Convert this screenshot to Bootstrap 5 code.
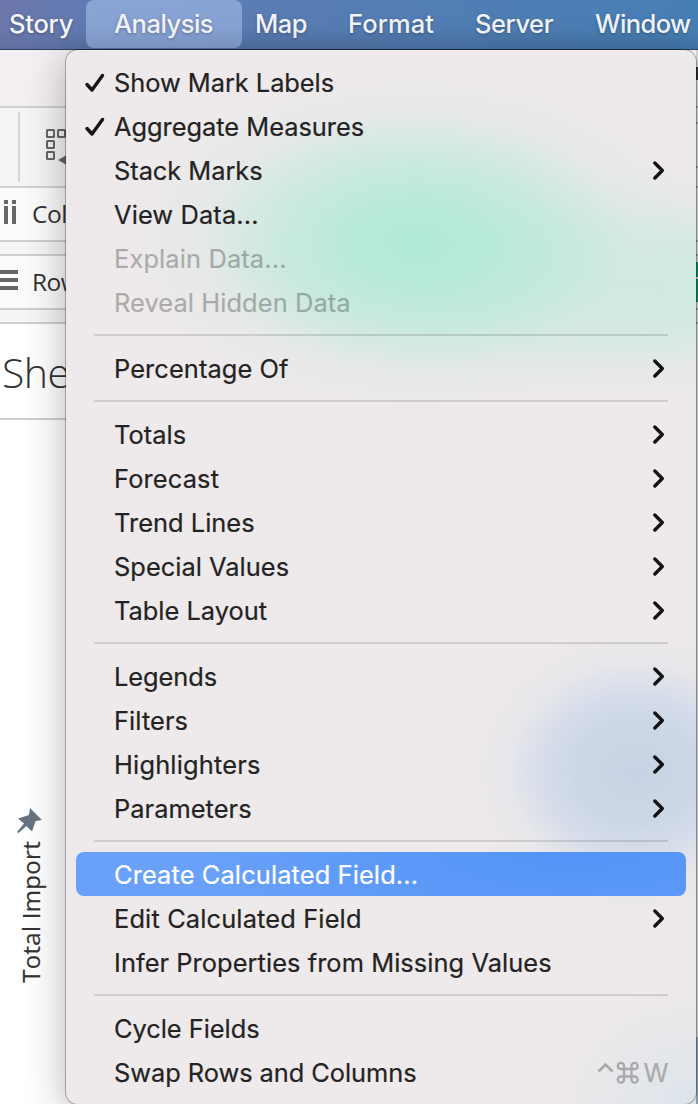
<!DOCTYPE html>
<html lang="en">
<head>
<meta charset="utf-8">
<meta name="viewport" content="width=device-width, initial-scale=1">
<title>Analysis menu</title>
<link href="https://cdn.jsdelivr.net/npm/bootstrap@5.3.0/dist/css/bootstrap.min.css" rel="stylesheet">
<style>
  body { width: 698px; height: 1104px; overflow: hidden; background: #fff; font-family: Inter, sans-serif; }
  .topbar { height: 50px; background: linear-gradient(180deg, transparent 60%, rgba(50,70,110,.16)), linear-gradient(90deg, #6c76aa 0, #5f7bb2 90px, #587db3 300px, #467fb5 698px); border-bottom: 1px solid #234660; color: #f4f6fb; font-size: 25.5px; font-weight: 500; text-shadow: 0 1px 3px rgba(0,0,0,.3); }
  .topbar .nav-item { height: 48px; line-height: 48px; white-space: nowrap; }
  .topbar .open { width: 156px; background: rgba(165,190,235,.6); border-radius: 8px; }
  .sheet { color: #333; width: 80px; white-space: nowrap; }
  .titleband { height: 58px; background: #f4f0f1; border-bottom: 2px solid #d2d0d0; }
  .tools { height: 80px; background: #f5f5f5; border-bottom: 2px solid #d2d2d2; }
  .tools .rule { width: 2px; height: 70px; background: #d4d4d4; }
  .shelf { height: 54px; background: #fbfbfb; border-bottom: 2px solid #cfcfcf; font-family: "Open Sans", sans-serif; font-size: 24.5px; letter-spacing: -.5px; }
  .shelf svg, .tools svg { flex: none; }
  .shelfgap { height: 14px; background: #f5f5f5; border-bottom: 2px solid #cfcfcf; }
  .sheetname { height: 96px; border-bottom: 2px solid #cfcfcf; font-family: "Open Sans", sans-serif; font-weight: 300; font-size: 41px; padding: 4px 0 0 2px; letter-spacing: -.5px; }
  .axis { padding: 387px 0 0 16px; width: 50px; }
  .axis span { writing-mode: vertical-rl; transform: rotate(180deg); font-family: "Open Sans", sans-serif; font-size: 24px; line-height: 32px; letter-spacing: .3px; margin: 6px 0 0 -1px; -webkit-text-stroke: .2px; }
  .edge { left: 696px; top: 50px; width: 2px; height: 1054px; background: #dedede; }
  .panel { left: 66px; top: 50px; width: 630px; height: 1054px; padding: 10px; border-radius: 12px; color: #232323; font-size: 25.4px; -webkit-text-stroke: .2px;
    background:
      radial-gradient(ellipse 170px 145px at 570px 722px, #c7d3e4 0, #ccd7e6 35%, rgba(211,219,234,.85) 56%, rgba(225,229,235,.5) 76%, rgba(236,233,234,0) 100%),
      radial-gradient(ellipse 290px 170px at 350px 192px, #b2ead8 0, rgba(180,234,216,.9) 25%, rgba(190,233,220,.7) 50%, rgba(215,233,228,.35) 75%, rgba(237,233,234,0) 100%),
      radial-gradient(ellipse 380px 120px at 560px 235px, rgba(200,233,224,.9) 0, rgba(206,233,226,.7) 45%, rgba(222,232,232,.35) 75%, rgba(237,233,234,0) 100%),
      radial-gradient(ellipse 150px 120px at 630px 1054px, #dce5eb 0, rgba(237,233,234,0) 100%),
      #eee9ea;
    box-shadow: 0 0 0 1px rgba(0,0,0,.28), 0 8px 42px rgba(0,0,0,.3); }
  .entry { height: 44px; padding: 0 20px 0 38px; line-height: 44px; position: relative; white-space: nowrap; }
  .entry [data-w] { padding-top: 2px; }
  .entry svg.tick { position: absolute; left: 8px; top: 13px; }
  .entry.off { color: #000; }
  .entry.off span { opacity: .27; }
  .entry.hot { background: radial-gradient(ellipse 380px 130px at 500px -10px, #5193f6 0, #5c9af8 55%, #69a1fa 100%); border-radius: 8px; color: #fff; }
  .divide { height: 2px; margin: 10px 18px; background: rgba(0,0,0,.12); }
  .keys { color: #a9a9aa; }
</style>
</head>
<body>
<nav class="topbar d-flex">
  <div class="nav-item" style="width:86px;padding-left:9px"><span data-w="63.500">Story</span></div>
  <div class="nav-item open" style="padding-left:28px"><span data-w="98.500">Analysis</span></div>
  <div class="nav-item" style="width:106px;padding-left:13px"><span data-w="51.500">Map</span></div>
  <div class="nav-item" style="width:127px"><span data-w="85.500">Format</span></div>
  <div class="nav-item" style="width:120px"><span data-w="77.500">Server</span></div>
  <div class="nav-item"><span data-w="95">Window</span></div>
</nav>
<main class="sheet">
  <div class="titleband"></div>
  <div class="tools d-flex">
    <div class="rule mt-1" style="margin-left:18px"></div>
    <svg width="24" height="42" viewBox="0 0 24 42" style="margin:18px 0 0 25px" fill="none" stroke="#666" stroke-width="2"><g transform="translate(2 0)"><rect x="0" y="4" width="7" height="7" rx=".5"/><rect x="11" y="4" width="7" height="7" rx=".5"/><rect x="0" y="15" width="7" height="7" rx=".5"/><rect x="0" y="26" width="7" height="7" rx=".5"/><path d="M11 34l8-4.500v9z" fill="#666" stroke="none"/></g></svg>
  </div>
  <div class="shelf d-flex align-items-center">
    <svg width="32" height="30" viewBox="0 0 32 30" fill="#666"><path d="M4 1h4v4H4zM12 1h4v4h-4zM4 7h4v18H4zM12 7h4v18h-4z"/></svg><span>Col</span>
  </div>
  <div class="shelfgap"></div>
  <div class="shelf d-flex align-items-center">
    <svg width="32" height="26" viewBox="0 0 32 26" fill="#666"><path d="M0 1h18v4H0zM0 9h18v4H0zM0 17h18v4H0z"/></svg><span>Row</span>
  </div>
  <div class="shelfgap"></div>
  <div class="sheetname d-flex align-items-center"><span>She</span></div>
  <div class="axis">
    <svg class="d-block" width="28" height="28" viewBox="0 0 28 28" fill="#667482"><path d="M14 1L26 13L19.500 14L16 24.500L10.500 19L2.500 26L1 25L8 16.500L2 11.500L13 8z"/></svg>
    <span class="d-block">Total Import</span>
  </div>
</main>
<div class="edge position-absolute">
  <svg class="d-block" width="2" height="1054"><path fill="#333" d="M0 17h2v13H0z"/><path fill="#aaa" d="M0 56h2v2H0zM0 72h2v2H0zM0 116h2v2H0zM0 136h2v2H0zM0 190h2v2H0zM0 204h2v2H0zM0 258h2v2H0zM0 272h2v2H0z"/><path fill="#07976b" d="M0 212h2v15H0zM0 229h2v23H0z"/><path fill="#91acc0" d="M0 987h2v67H0z"/></svg>
</div>
<div class="panel position-absolute" id="menu"></div>
<script src="https://cdn.jsdelivr.net/npm/bootstrap@5.3.0/dist/js/bootstrap.bundle.min.js"></script>
<script>
  // label, text width, flags: c = checked, s = submenu, o = disabled, h = highlighted, k = shortcut
  const entries = [
    ['Show Mark Labels', 219.5, 'c'], ['Aggregate Measures', 249.5, 'c'], ['Stack Marks', 148, 's'],
    ['View Data...', 144, ''], ['Explain Data...', 172, 'o'], ['Reveal Hidden Data', 236, 'o'], null,
    ['Percentage Of', 174, 's'], null,
    ['Totals', 71.5, 's'], ['Forecast', 104.5, 's'], ['Trend Lines', 140, 's'], ['Special Values', 174.5, 's'], ['Table Layout', 152.5, 's'], null,
    ['Legends', 102.5, 's'], ['Filters', 73.5, 's'], ['Highlighters', 146, 's'], ['Parameters', 137, 's'], null,
    ['Create Calculated Field...', 303.5, 'h'], ['Edit Calculated Field', 247, 's'], ['Infer Properties from Missing Values', 437, ''], null,
    ['Cycle Fields', 145, ''], ['Swap Rows and Columns', 302, 'k']
  ];
  const tick = '<svg class="tick" width="22" height="22" viewBox="0 0 22 22" fill="none" stroke="#151515" stroke-linecap="round" stroke-linejoin="round"><path stroke-width="3.400" d="M3 11.500L8 17L18.500 2.500"/></svg>';
  const arrow = '<svg class="ms-auto" width="14" height="22" viewBox="0 0 14 22" fill="none" stroke="#111" stroke-width="3.400" stroke-linecap="round" stroke-linejoin="round"><path d="M2.800 4.500L10.300 12L2.800 19.500" transform="translate(0 -.5)"/></svg>';
  const keys = '<svg class="ms-auto" width="46" height="44" viewBox="0 0 46 44" fill="none" stroke="#a9a9aa"><path stroke-width="2.600" d="M1.500 21.500l7-7l7 7"/><path stroke-width="2.300" d="M28 19h7.500v7.500h-7.500zM28 19h-3a3.100 3.100 0 1 1 3-3zM35.500 19v-3a3.100 3.100 0 1 1 3 3zM35.500 26.500h3a3.100 3.100 0 1 1-3 3zM28 26.500v3a3.100 3.100 0 1 1-3-3z" transform="translate(-1 0)"/></svg><span class="keys" data-w="23" style="margin-right:-1px">W</span>';
  document.getElementById('menu').innerHTML = entries.map(e => {
    if (!e) return '<div class="divide"></div>';
    const f = e[2];
    return '<div class="entry d-flex align-items-center' + (f === 'o' ? ' off' : f === 'h' ? ' hot' : '') + '">' +
      (f === 'c' ? tick : '') + '<span data-w="' + e[1] + '">' + e[0] + '</span>' +
      (f === 's' ? arrow : f === 'k' ? keys : '') + '</div>';
  }).join('');
  // even out tracking so each label fills its set width
  document.querySelectorAll('[data-w]').forEach(s => {
    const w = s.getBoundingClientRect().width;
    s.style.letterSpacing = ((+s.dataset.w + .6 - w) / s.textContent.length).toFixed(3) + 'px';
  });
</script>
</body>
</html>
